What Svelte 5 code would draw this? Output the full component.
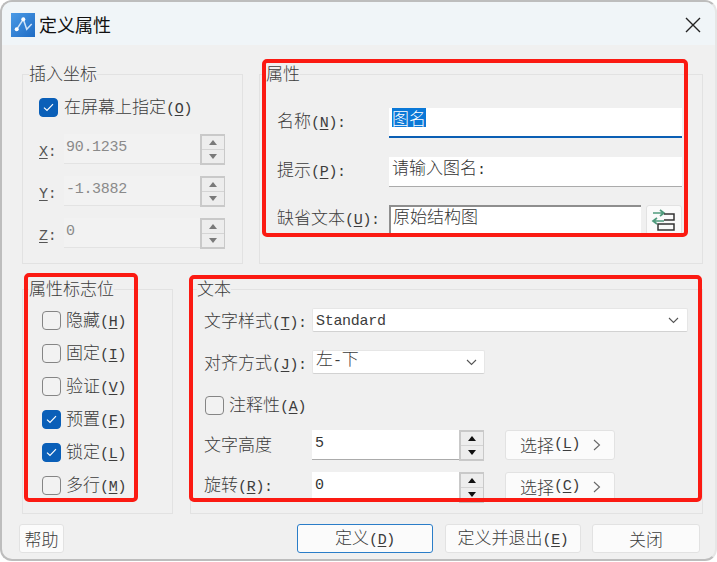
<script>
  const flags = [
    ['隐藏', 'H', false],
    ['固定', 'I', false],
    ['验证', 'V', false],
    ['预置', 'F', true],
    ['锁定', 'L', true],
    ['多行', 'M', false]
  ];
  const coords = [
    ['X', '90.1235'],
    ['Y', '-1.3882'],
    ['Z', '0']
  ];
</script>

{#snippet lab(cjk, key, colon)}
  <span class="lab">{cjk}{#if key}<span class="m">(<u>{key}</u>){colon ? ':' : ''}</span>{/if}</span>
{/snippet}

{#snippet box(on)}
  <span class="box" class:on>
    {#if on}
      <svg width="11" height="9" viewBox="0 0 11 9"><path d="M1 4.6 4 7.4 10 1.2" fill="none" stroke="#fff" stroke-width="1.2"/></svg>
    {/if}
  </span>
{/snippet}

{#snippet spin(off)}
  <span class="spin" class:off>
    <span class="cell"><i class="up"></i></span>
    <span class="cell"><i class="down"></i></span>
  </span>
{/snippet}

{#snippet chev(w)}
  <svg width={w} height="7" viewBox="0 0 11 7"><path d="M1 1 5.5 5.5 10 1" fill="none" stroke="#555" stroke-width="1.1"/></svg>
{/snippet}

<div class="window">
  <header class="title">
    <svg class="logo" width="24" height="24" viewBox="0 0 24 24">
      <defs>
        <linearGradient id="lg" x1="0" y1="0" x2="1" y2="1">
          <stop offset="0" stop-color="#4a9ae6"/>
          <stop offset="1" stop-color="#1f6cc4"/>
        </linearGradient>
      </defs>
      <rect width="24" height="24" fill="url(#lg)"/>
      <path d="M5.7 16.3 12.3 6.3 15.7 16.3 20.7 11" fill="none" stroke="#cfe3f8" stroke-width="1.5"/>
      <circle cx="5.7" cy="16.3" r="2" fill="#fff"/>
      <circle cx="12.3" cy="6.3" r="2" fill="#fff"/>
    </svg>
    <span class="ttl">定义属性</span>
    <svg class="close" width="16" height="16" viewBox="0 0 16 16"><path d="M1 1 15 15M15 1 1 15" stroke="#222" stroke-width="1.4"/></svg>
  </header>

  <div class="row first">
    <section class="group g1">
      <div class="legend">插入坐标</div>
      <div class="check top">{@render box(true)}{@render lab('在屏幕上指定', 'O')}</div>
      {#each coords as [k, v]}
        <div class="coord">
          <span class="lab m k"><u>{k}</u>:</span>
          <span class="field off"><span class="m">{v}</span></span>
          {@render spin(true)}
        </div>
      {/each}
    </section>

    <section class="group g2">
      <div class="legend">属性</div>
      <div class="arow">
        <span class="alab">{@render lab('名称', 'N', true)}</span>
        <span class="field grow focus"><span class="sel">图名</span></span>
      </div>
      <div class="arow">
        <span class="alab">{@render lab('提示', 'P', true)}</span>
        <span class="field grow">请输入图名<span class="m">:</span></span>
      </div>
      <div class="arow">
        <span class="alab">{@render lab('缺省文本', 'U', true)}</span>
        <span class="field grow sunk">原始结构图</span>
        <button class="swap" aria-label="切换">
          <svg width="26" height="22" viewBox="0 0 26 22">
            <path d="M2 4H12M9 1 13 4 9 7M13 12H3M6 9 2 12 6 15" fill="none" stroke="#4f9a7c" stroke-width="1.7"/>
            <path d="M13 5H23V11H13M7 15H23V21H7Z" fill="none" stroke="#333" stroke-width="1.5"/>
          </svg>
        </button>
      </div>
    </section>
  </div>

  <div class="row second">
    <section class="group g3">
      <div class="legend">属性标志位</div>
      <div class="flags">
        {#each flags as [c, k, on]}
          <div class="check">{@render box(on)}{@render lab(c, k)}</div>
        {/each}
      </div>
    </section>

    <section class="group g4">
      <div class="legend">文本</div>
      <div class="trow r1">
        <span class="tlab">{@render lab('文字样式', 'T', true)}</span>
        <span class="combo wide"><span class="m">Standard</span>{@render chev(11)}</span>
      </div>
      <div class="trow r2">
        <span class="tlab">{@render lab('对齐方式', 'J', true)}</span>
        <span class="combo narrow"><span>左<span class="m">-</span>下</span>{@render chev(11)}</span>
      </div>
      <div class="check anno">{@render box(false)}{@render lab('注释性', 'A')}</div>
      <div class="trow r3">
        <span class="tlab">{@render lab('文字高度')}</span>
        <span class="field num"><span class="m">5</span></span>
        {@render spin(false)}
        <button class="pick">选择<span class="m">(<u>L</u>)</span><svg width="8" height="12" viewBox="0 0 8 12"><path d="M1 1 6.5 6 1 11" fill="none" stroke="#666" stroke-width="1.1"/></svg></button>
      </div>
      <div class="trow r4">
        <span class="tlab">{@render lab('旋转', 'R', true)}</span>
        <span class="field num"><span class="m">0</span></span>
        {@render spin(false)}
        <button class="pick">选择<span class="m">(<u>C</u>)</span><svg width="8" height="12" viewBox="0 0 8 12"><path d="M1 1 6.5 6 1 11" fill="none" stroke="#666" stroke-width="1.1"/></svg></button>
      </div>
    </section>
  </div>

  <footer class="foot">
    <button class="btn help">帮助</button>
    <span class="spacer"></span>
    <button class="btn def">定义<span class="m">(<u>D</u>)</span></button>
    <button class="btn defx">定义并退出<span class="m">(<u>E</u>)</span></button>
    <button class="btn cls">关闭</button>
  </footer>

  <div class="mark m1"></div>
  <div class="mark m2"></div>
  <div class="mark m3"></div>
</div>

<style>
  :global(body) { margin: 0; background: #fff; }
  .window {
    position: relative;
    box-sizing: border-box;
    width: 717px;
    height: 561px;
    overflow: hidden;
    background: #f0f0f0;
    border: 2px solid #bdbdbd;
    border-right-color: #e6e6e6;
    border-radius: 12px;
    color: #3c3c3c;
    font: 17px/20px "Noto Sans CJK SC", sans-serif;
    font-weight: 300;
  }
  .m { font-family: "Liberation Mono", monospace; font-size: 15px; letter-spacing: -0.3px; font-weight: 400; }
  u { text-underline-offset: 2px; text-decoration-thickness: 1px; }
  button { font: inherit; color: inherit; padding: 0; }

  .title {
    display: flex;
    align-items: center;
    height: 43px;
    padding: 0 14px 0 9px;
    background: #f0f5f8;
    color: #111;
  }
  .logo { margin-top: 2px; }
  .ttl { margin-left: 4px; font-size: 18px; font-weight: 400; }
  .close { margin-left: auto; margin-top: 3px; }

  .row { display: flex; padding-left: 20px; }
  .first { margin-top: 29px; gap: 16px; height: 190px; }
  .second { margin-top: 25px; gap: 17px; height: 225px; }

  .group {
    box-sizing: border-box;
    border: 1px solid #e2e2e2;
    display: flex;
    flex-direction: column;
    flex: none;
  }
  .legend {
    width: fit-content;
    height: 18px;
    line-height: 18px;
    margin: -11px 0 0 6px;
    background: #f0f0f0;
  }
  .g1 { width: 221px; }
  .g2 { width: 444px; }
  .g3 { width: 151px; }
  .g4 { width: 513px; }

  .check { display: flex; align-items: center; height: 19px; }
  .box {
    box-sizing: border-box;
    width: 19px;
    height: 19px;
    flex: none;
    border: 1.5px solid #858585;
    border-radius: 4px;
    background: #f2f2f2;
    margin-right: 5px;
    display: flex;
    align-items: center;
    justify-content: center;
  }
  .box.on { background: #0a5fb8; border-color: #0a5fb8; }
  .lab { white-space: nowrap; }

  .top { margin: 16px 0 0 16px; }
  .top .box { margin-right: 6px; }
  .coord {
    display: flex;
    align-items: stretch;
    height: 30px;
    margin: 12px 0 0 16px;
    color: #555;
  }
  .top + .coord { margin-top: 17px; }
  .k { width: 25px; align-self: flex-end; line-height: 20px; padding-bottom: 1px; }

  .field {
    box-sizing: border-box;
    display: block;
    height: 30px;
    padding-left: 3px;
    background: #fff;
    border-bottom: 1.5px solid #ababab;
    line-height: 20px;
    color: #333;
  }
  .field.off {
    width: 136px;
    padding-left: 2px;
    background: #f2f2f2;
    border-bottom: 1px solid #e3e3e3;
    color: #8a8a8a;
  }
  .spin {
    box-sizing: border-box;
    width: 25px;
    height: 31px;
    flex: none;
    display: flex;
    flex-direction: column;
    border: 2px solid #c9c9c9;
    border-right-width: 1px;
    background: #ededed;
  }
  .cell {
    flex: 1;
    display: flex;
    align-items: center;
    justify-content: center;
  }
  .cell:first-child { border-bottom: 1px solid #d4d4d4; }
  .up, .down {
    width: 0;
    height: 0;
    border-left: 4.5px solid transparent;
    border-right: 4.5px solid transparent;
  }
  .up { border-bottom: 5px solid #111; }
  .down { border-top: 5px solid #111; }
  .spin.off .up { border-bottom-color: #7a7a7a; }
  .spin.off .down { border-top-color: #7a7a7a; }

  .arow { display: flex; align-items: stretch; height: 30px; margin: 19px 0 0 17px; }
  .arow:nth-child(2) { margin-top: 26px; }
  .arow:nth-child(4) { margin-top: 18px; }
  .alab { width: 112px; flex: none; display: flex; align-items: center; padding-bottom: 2px; box-sizing: border-box; }
  .grow { flex: 1; margin-right: 20px; }
  .arow:last-child .grow { margin-right: 5px; }
  .focus { border-bottom: 2px solid #0a5fb4; }
  .sel { background: #0a78d7; color: #fff; display: inline-block; height: 19px; line-height: 19px; }
  .sunk { border: 0; border-top: 2px solid #8e8e8e; border-left: 2px solid #8e8e8e; height: 30px; padding-left: 2px; line-height: 17px; }
  .swap {
    width: 36px;
    margin-right: 20px;
    box-sizing: border-box;
    border: 1px solid #e2e2e2;
    border-radius: 3px;
    background: #fafafa;
    display: flex;
    align-items: center;
    justify-content: center;
  }

  .flags { display: flex; flex-direction: column; gap: 14px; margin: 14px 0 0 19px; }

  .trow { display: flex; align-items: stretch; margin-left: 13px; }
  .r1 { margin-top: 11px; height: 24px; }
  .r2 { margin-top: 18px; height: 24px; }
  .r3 { margin-top: 15px; height: 30px; }
  .r4 { margin-top: 12px; height: 30px; }
  .anno { margin: 22px 0 0 14px; }
  .tlab { width: 108px; flex: none; display: flex; align-items: center; padding-top: 3px; box-sizing: border-box; }
  .r3 .tlab, .r4 .tlab { padding-top: 0; padding-bottom: 3px; }
  .combo {
    box-sizing: border-box;
    display: flex;
    align-items: center;
    justify-content: space-between;
    padding: 0 8px 4px 3px;
    background: #fff;
    border: 1px solid #e6e6e6;
    border-bottom-color: #d2d2d2;
    border-radius: 2px;
  }
  .combo svg { margin-top: 4px; }
  .wide { width: 376px; padding-top: 3px; padding-bottom: 0; }
  .wide svg { margin-top: -3px; }
  .narrow { width: 173px; padding-right: 7px; }
  .num { width: 147px; }
  .pick {
    box-sizing: border-box;
    width: 110px;
    height: 30px;
    margin-left: 21px;
    border: 1px solid #e2e2e2;
    border-radius: 3px;
    background: #fbfbfb;
    display: flex;
    align-items: center;
    padding-left: 14px;
    line-height: 20px;
  }
  .pick svg { margin-left: 13px; }

  .foot { display: flex; margin-top: 10px; padding-left: 17px; height: 29px; }
  .spacer { width: 233px; }
  .btn {
    box-sizing: border-box;
    height: 29px;
    border: 1px solid #e2e2e2;
    border-radius: 3px;
    background: #fbfbfb;
    line-height: 20px;
  }
  .help { width: 45px; }
  .def { width: 136px; border-color: #2a7dc8; }
  .defx { width: 136px; margin-left: 12px; }
  .cls { width: 108px; margin-left: 11px; }

  .mark {
    position: absolute;
    box-sizing: border-box;
    border: 4px solid #fb1a12;
    border-radius: 5px;
    pointer-events: none;
  }
  .m1 { left: 260px; top: 57px; width: 426px; height: 178px; }
  .m2 { left: 22px; top: 271px; width: 114px; height: 229px; }
  .m3 { left: 187px; top: 273px; width: 513px; height: 227px; }
</style>
